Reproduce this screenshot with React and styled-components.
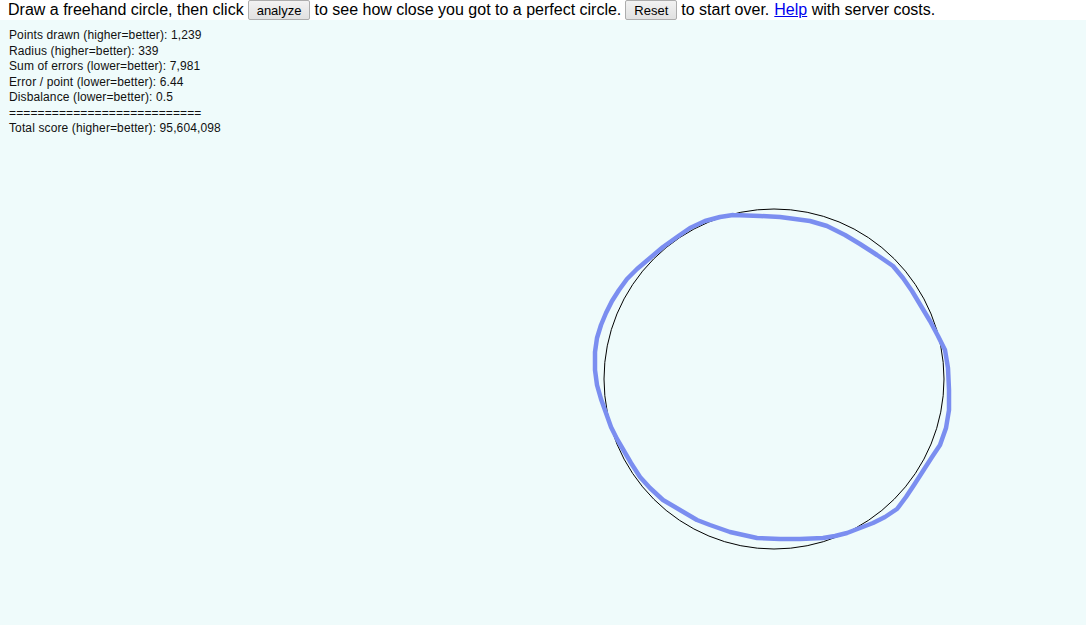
import styled, { createGlobalStyle } from "styled-components";

const GlobalStyle = createGlobalStyle`
  html, body {
    margin: 0;
    padding: 0;
    overflow: hidden;
    background: #fff;
  }
`;

const STATS = [
  "Points drawn (higher=better): 1,239",
  "Radius (higher=better): 339",
  "Sum of errors (lower=better): 7,981",
  "Error / point (lower=better): 6.44",
  "Disbalance (lower=better): 0.5",
  "===========================",
  "Total score (higher=better): 95,604,098",
];

// freehand stroke, in canvas coordinates (panel starts 20px down the page)
const STROKE = [
  [733, 215], [760, 216], [780, 217], [810, 221], [827, 226], [845, 235],
  [860, 244], [877, 255], [893, 266], [903, 278], [912, 291], [921, 306],
  [930, 321], [938, 336], [945, 350], [948, 368], [949, 390], [949, 410],
  [946, 428], [940, 445], [932, 457], [923, 471], [914, 485], [906, 497],
  [897, 509], [885, 517], [873, 523], [860, 528], [847, 533], [835, 536],
  [823, 538], [800, 539], [780, 539], [757, 538], [730, 532], [710, 525],
  [697, 520], [680, 510], [663, 500], [650, 488], [640, 477], [631, 463],
  [624, 451], [617, 439], [611, 427], [606, 413], [601, 399], [597, 385],
  [595, 370], [595, 352], [597, 338], [601, 325], [606, 313], [612, 301],
  [619, 290], [627, 279], [637, 269], [650, 258], [663, 247], [677, 237],
  [690, 228], [705, 221], [720, 217], [733, 215],
].map(([x, y]) => `${x},${y - 20}`).join(" ");

const Page = styled.div`
  font-family: "Liberation Sans", Arial, sans-serif;
  color: #000;
`;

const Header = styled.div`
  height: 20px;
  padding: 0 8px;
  font-size: 16px;
  line-height: 19px;
  white-space: nowrap;
  display: flex;
  align-items: flex-start;
`;

const Button = styled.button`
  font-family: "Liberation Sans", Arial, sans-serif;
  font-size: 13px;
  height: 20px;
  margin: 0 4px;
  padding: 0 8px;
  border: 1px solid #adadad;
  border-radius: 2px;
  background: linear-gradient(#f2f2f2, #e1e1e1);
  color: #000;
  cursor: pointer;
`;

const HelpLink = styled.a`
  color: #0000ee;
  text-decoration: underline;
  margin-left: 5px;
`;

const Canvas = styled.div`
  position: relative;
  height: calc(100vh - 20px);
  background: #effbfb;
`;

const Stats = styled.div`
  position: relative;
  z-index: 1;
  padding: 8px 9px;
  font-size: 12px;
  line-height: 15.5px;
  letter-spacing: 0.12px;
  color: #111;
`;

const Drawing = styled.svg`
  position: absolute;
  inset: 0;
  width: 100%;
  height: 100%;
`;

export default function App() {
  return (
    <Page>
      <GlobalStyle />
      <Header>
        <span>Draw a freehand circle, then click</span>
        <Button>analyze</Button>
        <span>to see how close you got to a perfect circle.</span>
        <Button>Reset</Button>
        <span>to start over.</span>
        <HelpLink href="#">Help</HelpLink>
        <span>&nbsp;with server costs.</span>
      </Header>
      <Canvas>
        <Stats>
          {STATS.map((line) => (
            <div key={line}>{line}</div>
          ))}
        </Stats>
        <Drawing>
          <circle cx="774" cy="359" r="170" fill="none" stroke="#000" strokeWidth="1" />
          <polyline
            points={STROKE}
            fill="none"
            stroke="#7b8ef0"
            strokeWidth="4.5"
            strokeLinejoin="round"
            strokeLinecap="round"
          />
        </Drawing>
      </Canvas>
    </Page>
  );
}
